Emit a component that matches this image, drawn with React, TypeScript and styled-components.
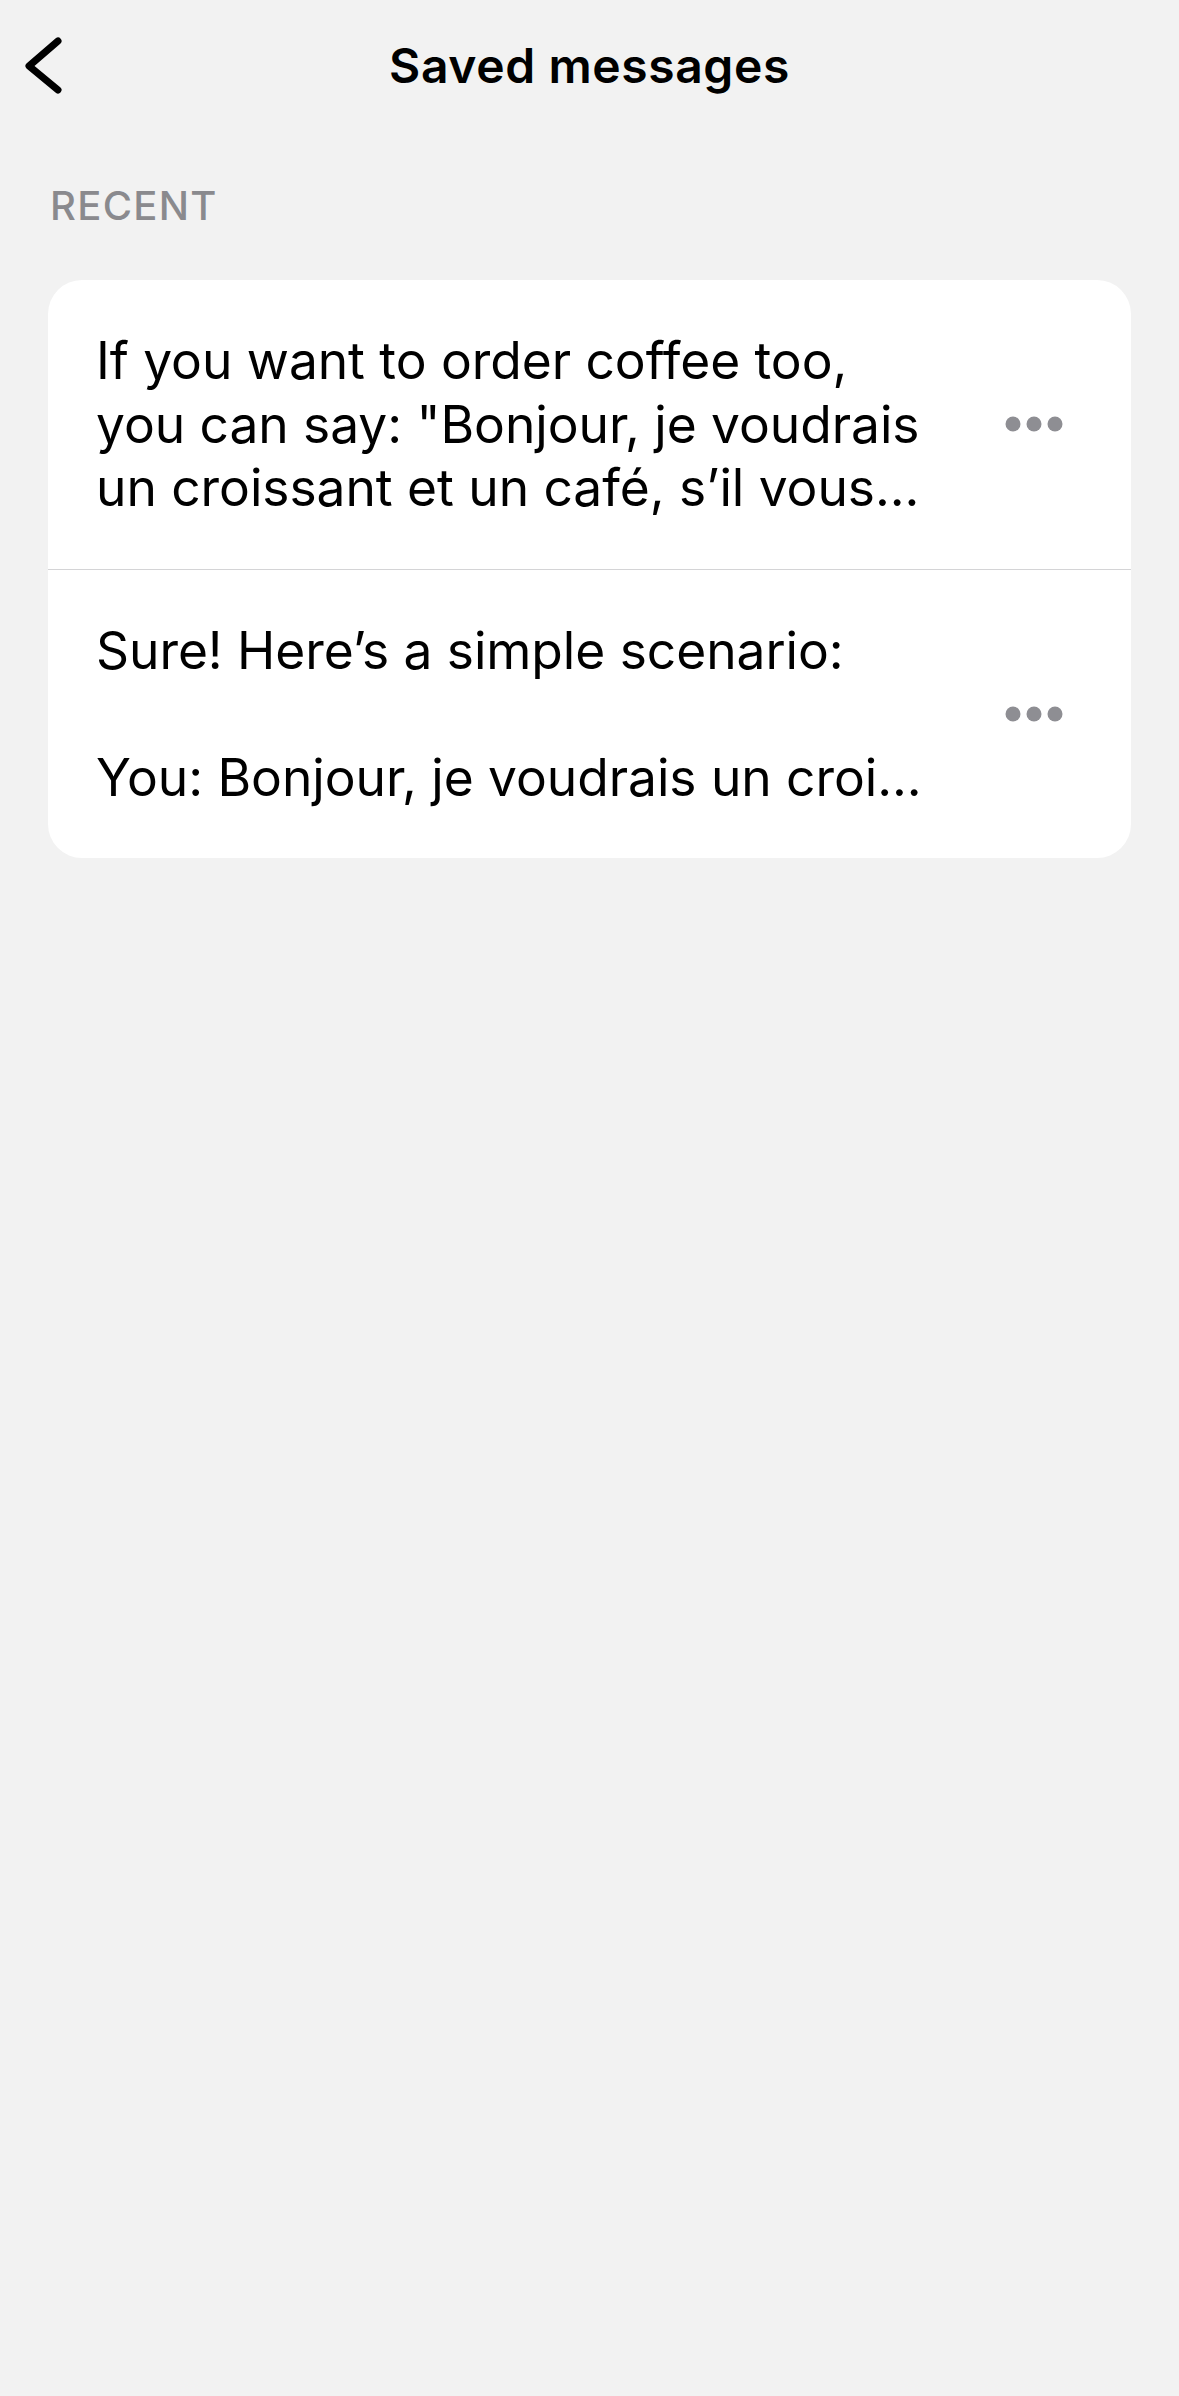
import * as React from "react";
import styled, { createGlobalStyle } from "styled-components";

const GlobalStyle = createGlobalStyle`
  html, body {
    margin: 0;
    padding: 0;
    background: #f2f2f2;
  }
  body {
    font-family: Inter, "Noto Sans", "Liberation Sans", sans-serif;
    -webkit-font-smoothing: antialiased;
  }
`;

const Page = styled.div`
  min-height: 2396px;
  background: #f2f2f2;
  color: #000;
`;

const Header = styled.header`
  height: 132px;
  display: grid;
  grid-template-columns: 1fr auto 1fr;
  align-items: center;
`;

const BackButton = styled.button`
  justify-self: start;
  display: flex;
  align-items: center;
  margin: 0;
  padding: 0 0 0 20px;
  border: 0;
  background: none;
  cursor: pointer;
`;

const Title = styled.h1`
  margin: 0;
  font-size: 48px;
  line-height: 1.2;
  font-weight: 600;
  letter-spacing: 0.6px;
`;

const SectionLabel = styled.div`
  margin: 50px 0 50px 50px;
  font-size: 40px;
  line-height: 48px;
  font-weight: 500;
  color: #8a8a8e;
  letter-spacing: 1.3px;
`;

const Card = styled.section`
  margin: 0 48px;
  background: #fff;
  border-radius: 34px;
  overflow: hidden;
`;

const Row = styled.div<{ $divider?: boolean }>`
  display: flex;
  align-items: center;
  justify-content: space-between;
  gap: 24px;
  padding: 49px 68px 49px 48px;
  border-top: ${(p) => (p.$divider ? "1px solid #d4d4d6" : "none")};
`;

const Preview = styled.p`
  margin: 0;
  font-size: 51.5px;
  line-height: 63.5px;
  font-weight: 400;
  letter-spacing: -0.05px;
  color: #000;
`;

const Line = styled.span`
  display: block;
  white-space: nowrap;
  min-height: 63.5px;
`;

const MoreButton = styled.button`
  flex: none;
  display: flex;
  margin: 0;
  padding: 0;
  border: 0;
  background: none;
  cursor: pointer;
`;

const ChevronLeft = () => (
  <svg width="46" height="60" viewBox="0 0 46 60" fill="none">
    <path
      d="M38 5 L9 30 L38 54"
      stroke="#000"
      strokeWidth="7"
      strokeLinecap="round"
      strokeLinejoin="round"
    />
  </svg>
);

const Ellipsis = () => (
  <svg width="58" height="16" viewBox="0 0 58 16">
    <circle cx="8" cy="8" r="7.5" fill="#8e8e93" />
    <circle cx="29" cy="8" r="7.5" fill="#8e8e93" />
    <circle cx="50" cy="8" r="7.5" fill="#8e8e93" />
  </svg>
);

const messages: string[][] = [
  [
    "If you want to order coffee too,",
    "you can say: \"Bonjour, je voudrais",
    "un croissant et un café, s\u2019il vous...",
  ],
  [
    "Sure! Here\u2019s a simple scenario:",
    "",
    "You: Bonjour, je voudrais un croi...",
  ],
];

const App: React.FC = () => {
  return (
    <Page>
      <GlobalStyle />
      <Header>
        <BackButton aria-label="Back">
          <ChevronLeft />
        </BackButton>
        <Title>Saved messages</Title>
        <div />
      </Header>
      <SectionLabel>RECENT</SectionLabel>
      <Card>
        {messages.map((lines, i) => (
          <Row key={i} $divider={i > 0}>
            <Preview>
              {lines.map((line, j) => (
                <Line key={j}>{line}</Line>
              ))}
            </Preview>
            <MoreButton aria-label="More">
              <Ellipsis />
            </MoreButton>
          </Row>
        ))}
      </Card>
    </Page>
  );
};

export default App;
